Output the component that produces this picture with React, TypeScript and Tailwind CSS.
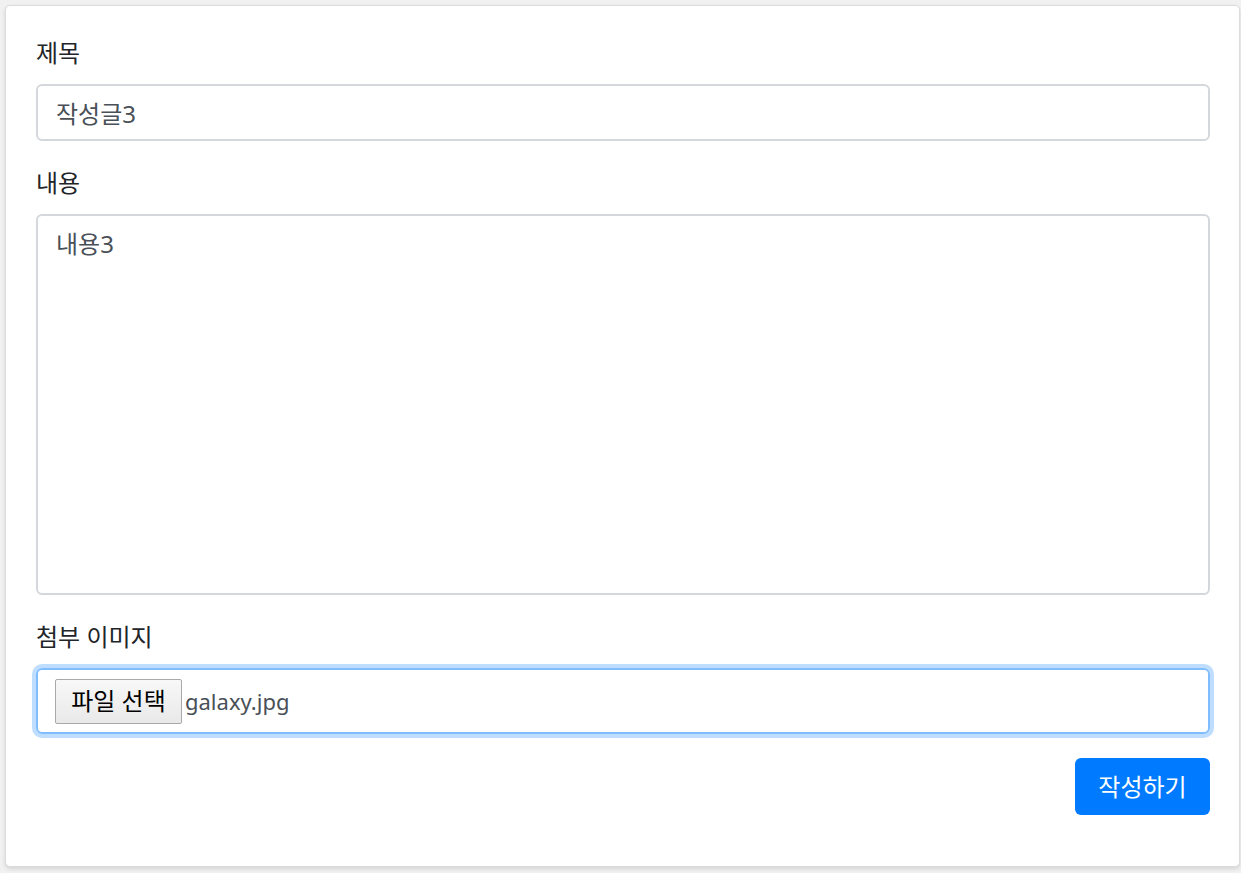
import React from "react";

const font = { fontFamily: '"Noto Sans", "Noto Sans CJK KR", sans-serif' };

export default function App() {
  return (
    <div className="min-h-screen w-full bg-[#f1f1f1] pt-[5px] pl-[5px] pr-[1px] pb-[6px]" style={font}>
      <div className="bg-white border border-[#dcdcdc] rounded-[5px] shadow-[0_2px_4px_rgba(0,0,0,0.12)] pl-[30px] pr-[29px] pt-[32px] pb-[51px]">
        <div className="flex flex-col mb-[27px]">
          <label className="text-[24px] leading-[30px] text-[#212529] mb-[16px]">제목</label>
          <input
            readOnly
            value="작성글3"
            className="h-[57px] w-full border-2 border-[#d4d8dc] rounded-[6px] px-[18px] text-[24px] text-[#495057] outline-none"
            style={font}
          />
        </div>

        <div className="flex flex-col mb-[27px]">
          <label className="text-[24px] leading-[30px] text-[#212529] mb-[16px]">내용</label>
          <textarea
            readOnly
            value="내용3"
            className="h-[381px] w-full border-2 border-[#d4d8dc] rounded-[6px] px-[18px] pt-[10px] text-[24px] leading-[36px] text-[#495057] outline-none resize-none"
            style={font}
          />
        </div>

        <div className="flex flex-col mb-[24px]">
          <label className="text-[24px] leading-[30px] text-[#212529] mb-[16px]">첨부 이미지</label>
          <div className="h-[66px] w-full border-2 border-[#80bdff] rounded-[6px] ring-4 ring-[#007bff]/25 flex items-center px-[17px]">
            <span className="h-[45px] w-[127px] justify-center flex items-center border border-[#a9a9a9] rounded-[2px] bg-gradient-to-b from-[#f8f8f8] to-[#e9e9e9] text-[24px] text-black">
              파일 선택
            </span>
            <span className="ml-[3px] text-[22px] text-[#495057]">galaxy.jpg</span>
          </div>
        </div>

        <div className="flex justify-end">
          <button className="h-[57px] w-[135px] bg-[#007bff] text-white text-[24px] rounded-[6px]" style={font}>
            작성하기
          </button>
        </div>
      </div>
    </div>
  );
}
